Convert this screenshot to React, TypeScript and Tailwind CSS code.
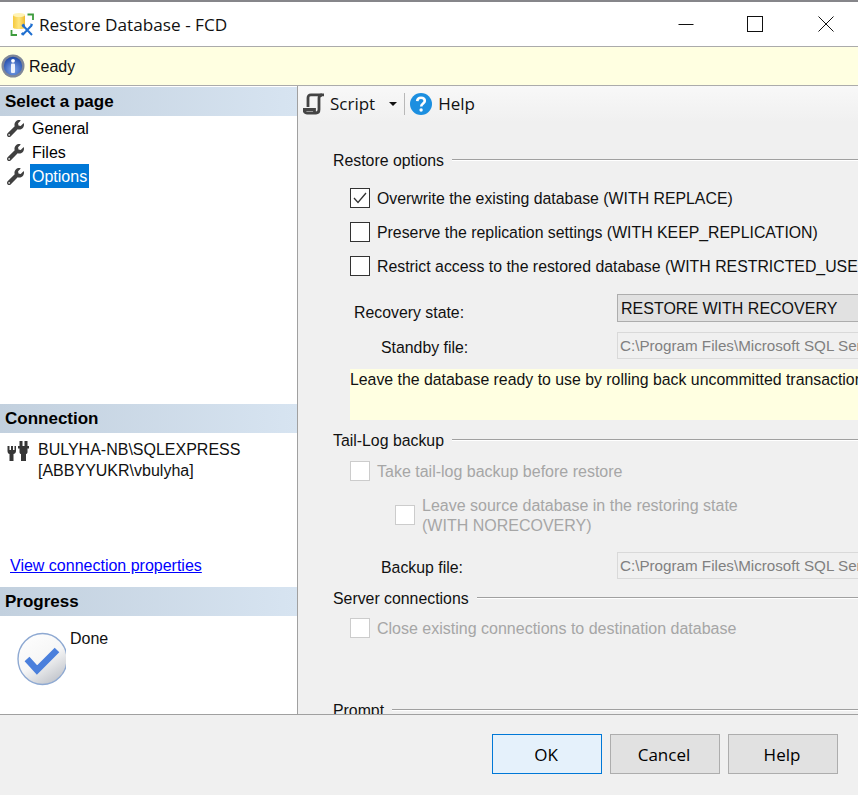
import React from "react";
import { FaWrench } from "react-icons/fa";

function TitleIcon() {
  return (
    <svg width="24" height="24" viewBox="0 0 24 24" className="shrink-0">
      <defs>
        <linearGradient id="db" x1="0" x2="1" y1="0" y2="0">
          <stop offset="0" stopColor="#f5c93d" />
          <stop offset="0.5" stopColor="#ffe680" />
          <stop offset="1" stopColor="#eebb2e" />
        </linearGradient>
      </defs>
      <path d="M3 3.5C3 1.5 15 1.5 15 3.5V15.5C15 17.5 3 17.5 3 15.5Z" fill="url(#db)" />
      <ellipse cx="9" cy="3" rx="6" ry="2" fill="#fff3b5" />
      <path d="M17.5 2.5H23V8M1.5 18V23H7" fill="none" stroke="#3e9c3e" strokeWidth="1.8" />
      <path d="M12.5 13L22 23M22 13L12.5 23" stroke="#1f6fd0" strokeWidth="2" />
      <path d="M11.5 13l2.5-1.5 1 2.5-2 1.5zM20 11.5l3 .5-1.5 3zM11 21.5l2-1.5 1 2-2 1.5z" fill="#1f6fd0" />
    </svg>
  );
}

function InfoIcon() {
  return (
    <svg width="24" height="24" viewBox="0 0 24 24" className="shrink-0">
      <defs>
        <radialGradient id="inf" cx="0.5" cy="0.7" r="0.7">
          <stop offset="0" stopColor="#7fa6ec" />
          <stop offset="1" stopColor="#1e49a8" />
        </radialGradient>
      </defs>
      <circle cx="12" cy="12" r="11.5" fill="#7f8798" />
      <circle cx="12" cy="12" r="9.2" fill="url(#inf)" />
      <circle cx="12" cy="6.8" r="1.9" fill="#fff" />
      <rect x="10" y="9.6" width="4" height="9.4" rx="1" fill="#eef2fb" />
    </svg>
  );
}

function PlugIcon() {
  return (
    <svg width="22" height="22" viewBox="0 0 22 22" className="shrink-0" fill="#363636">
      <path d="M0.5 6H2.5V10H4V6H4.5H6V10H7.5V6H9V11C9 13 7.5 14 6.5 14V21H2.5V14C1.5 14 0.5 13 0.5 11Z" />
      <path d="M12.5 1H15.5V6H17.5V1H20.5V6H22V8.5H20.5V12C20.5 13.5 19.5 14 19 14V21H14V14C13.5 14 12.5 13.5 12.5 12V8.5H11V6H12.5Z" />
    </svg>
  );
}

function DoneIcon() {
  return (
    <svg width="49" height="54" viewBox="0 0 49 54" className="shrink-0 mt-[3px]">
      <defs>
        <linearGradient id="done" x1="0" x2="0.6" y1="0" y2="1">
          <stop offset="0" stopColor="#ffffff" />
          <stop offset="0.6" stopColor="#f6f6f6" />
          <stop offset="1" stopColor="#c6c9cf" />
        </linearGradient>
      </defs>
      <ellipse cx="25.5" cy="27" rx="24.5" ry="25.5" fill="url(#done)" stroke="#8ea9d2" strokeWidth="1.4" />
      <path d="M10 27L20 38L40 18" fill="none" stroke="#4a7fdc" strokeWidth="6.5" strokeLinejoin="miter" />
    </svg>
  );
}

function ScriptIcon() {
  return (
    <svg width="22" height="22" viewBox="0 0 22 22" className="shrink-0" fill="none" stroke="#444" strokeWidth="2.8">
      <path d="M5 14V5C5 3 6 1.8 8 1.8H21" />
      <path d="M19 2C17 2 16 3.2 16 5V16.5C16 19 15 20 13 20H4C2 20 1 18.8 1 16.5H11.5V19" />
    </svg>
  );
}

function HelpIcon() {
  return (
    <svg width="22" height="22" viewBox="0 0 22 22" className="shrink-0">
      <circle cx="11" cy="11" r="11" fill="#1c8fe0" />
      <path d="M7.2 8.2C7.4 5.8 9 4.8 11 4.8C13.2 4.8 14.8 6 14.8 8C14.8 10.4 11.2 10.6 11.2 13.4" fill="none" stroke="#fff" strokeWidth="2.6" />
      <circle cx="11.1" cy="17" r="1.7" fill="#fff" />
    </svg>
  );
}

function PaneHeader({ children }: { children: React.ReactNode }) {
  return (
    <div className="h-[29px] pl-[5px] flex items-center bg-gradient-to-r from-[#c2d0de] to-[#d7e4f1] font-bold text-[17px] text-black">
      {children}
    </div>
  );
}

function PageItem({ label, active }: { label: string; active?: boolean }) {
  return (
    <div className="h-6 flex items-center pl-[7px]">
      <FaWrench className="text-[#404040] shrink-0" size={17} />
      <span className={active ? "ml-[6px] h-6 px-[2px] pt-[2px] flex items-center bg-[#0078d7] text-white" : "ml-[6px] px-[2px] pt-[2px] text-black"}>
        {label}
      </span>
    </div>
  );
}

function Section({ title, className }: { title: string; className?: string }) {
  return (
    <div className={"flex items-center h-6 ml-[35px] text-[15.85px] " + (className ?? "")}>
      <span className="whitespace-nowrap pt-[2px] text-[#111]">{title}</span>
      <div className="ml-2 flex-1 h-[2px] border-t border-[#a0a0a0] bg-white" />
    </div>
  );
}

function CheckBox({ checked, disabled }: { checked?: boolean; disabled?: boolean }) {
  return (
    <div className={"w-5 h-5 shrink-0 border bg-white flex items-center justify-center " + (disabled ? "border-[#cccccc]" : "border-[#333333]")}>
      {checked && (
        <svg width="16" height="16" viewBox="0 0 16 16" fill="none" stroke="#333" strokeWidth="1.3">
          <path d="M2 8L6 12.5L14 3" />
        </svg>
      )}
    </div>
  );
}

function CheckRow({ label, checked }: { label: string; checked?: boolean }) {
  return (
    <div className="h-[34px] ml-[52px] flex items-center gap-[7px] whitespace-nowrap text-[#111] text-[15.85px]">
      <CheckBox checked={checked} />
      <span className="pt-[2px]">{label}</span>
    </div>
  );
}

function DisabledRow({ label, className }: { label: string; className?: string }) {
  return (
    <div className={"h-[34px] ml-[52px] flex items-center gap-[7px] whitespace-nowrap text-[#a6a6a6] " + (className ?? "")}>
      <CheckBox disabled />
      <span className="pt-[2px]">{label}</span>
    </div>
  );
}

function PathField({ label, labelClass, className }: { label: string; labelClass: string; className?: string }) {
  return (
    <div className={"flex items-center h-[27px] text-[15.85px] " + (className ?? "")}>
      <span className={"whitespace-nowrap text-[#111] mt-[5px] " + labelClass}>{label}</span>
      <div className="ml-auto w-[400px] shrink-0 -mr-[159px] h-[27px] pl-[2px] flex items-center border border-[#d9d9d9] bg-[#f0f0f0] text-[#808080] text-[15.2px] whitespace-nowrap overflow-hidden">
        C:\Program Files\Microsoft SQL Server\MSSQL14.SQLEXPRESS\MSSQL\Backup
      </div>
    </div>
  );
}

function FooterButton({ label, primary }: { label: string; primary?: boolean }) {
  return (
    <button
      className={
        "w-[110px] h-10 border pr-[2px] pt-px font-['Open_Sans',sans-serif] text-[17px] text-black " +
        (primary ? "border-[#0078d7] bg-[#e5f1fb]" : "border-[#adadad] bg-[#e1e1e1]")
      }
    >
      {label}
    </button>
  );
}

export default function App() {
  return (
    <div className="w-[858px] h-[795px] overflow-hidden flex flex-col bg-[#f0f0f0] font-['Liberation_Sans',sans-serif] text-base leading-5">
      <div className="h-[2px] shrink-0 bg-[#86868a]" />

      {/* title bar */}
      <div className="h-[44px] shrink-0 bg-white flex items-center pl-[10px] border-b border-[#ababab] box-content">
        <TitleIcon />
        <span className="ml-[5px] pt-[2px] font-['Open_Sans',sans-serif] text-[17.2px] text-[#111]">Restore Database - FCD</span>
        <div className="ml-auto flex items-center">
          <svg width="16" height="16" viewBox="0 0 16 16" className="mr-[53px]">
            <path d="M0.5 8.5H15.5" stroke="#111" strokeWidth="1" />
          </svg>
          <svg width="16" height="16" viewBox="0 0 16 16" className="mr-[55px]">
            <rect x="0.5" y="0.5" width="15" height="15" fill="none" stroke="#111" strokeWidth="1" />
          </svg>
          <svg width="16" height="16" viewBox="0 0 16 16" className="mr-[24px]">
            <path d="M0.5 0.5L15.5 15.5M15.5 0.5L0.5 15.5" stroke="#111" strokeWidth="1" />
          </svg>
        </div>
      </div>

      {/* status */}
      <div className="h-[38px] shrink-0 bg-[#ffffe1] flex items-center pl-px border-b border-[#ababab] box-content">
        <InfoIcon />
        <span className="ml-[4px] pt-[2px] text-[#111]">Ready</span>
      </div>

      <div className="h-[628px] shrink-0 flex overflow-hidden">
        {/* left pane */}
        <div className="w-[298px] shrink-0 bg-white border-r border-[#a0a0a0] flex flex-col pt-px">
          <PaneHeader>Select a page</PaneHeader>
          <div className="h-[288px]">
            <PageItem label="General" />
            <PageItem label="Files" />
            <PageItem label="Options" active />
          </div>
          <PaneHeader>Connection</PaneHeader>
          <div className="h-[154px] flex flex-col pl-[7px]">
            <div className="flex mt-[7px]">
              <PlugIcon />
              <div className="ml-[9px] mt-[-1px] leading-[21px] text-[#111]">
                <div>BULYHA-NB\SQLEXPRESS</div>
                <div>[ABBYYUKR\vbulyha]</div>
              </div>
            </div>
            <a className="mt-auto mb-[11px] ml-[3px] underline text-[#0000ff]">View connection properties</a>
          </div>
          <PaneHeader>Progress</PaneHeader>
          <div className="flex pl-[17px] pt-[13px]">
            <DoneIcon />
            <span className="ml-[4px] text-[#111]">Done</span>
          </div>
        </div>

        {/* right pane */}
        <div className="flex-1 min-w-0 overflow-hidden">
          <div className="h-9 flex items-center pl-[5px] bg-gradient-to-b from-[#f8f8f8] to-[#f0f0f0] font-['Open_Sans',sans-serif] text-[17px] text-[#111]">
            <ScriptIcon />
            <span className="ml-[5px]">Script</span>
            <svg width="8" height="4" viewBox="0 0 8 4" className="ml-[14px]">
              <path d="M0 0H8L4 4Z" fill="#111" />
            </svg>
            <div className="ml-[7px] w-px h-[22px] bg-[#b8b8b8]" />
            <div className="ml-[5px]">
              <HelpIcon />
            </div>
            <span className="ml-[6px]">Help</span>
          </div>

          <Section title="Restore options" className="mt-[26px]" />
          <div className="mt-[9px]">
            <CheckRow label="Overwrite the existing database (WITH REPLACE)" checked />
            <CheckRow label="Preserve the replication settings (WITH KEEP_REPLICATION)" />
            <CheckRow label="Restrict access to the restored database (WITH RESTRICTED_USER)" />
          </div>

          <div className="flex items-center h-[28px] mt-[11px] text-[15.85px]">
            <span className="ml-[56px] mt-[10px] whitespace-nowrap text-[#111]">Recovery state:</span>
            <div className="ml-auto w-[400px] shrink-0 -mr-[159px] h-[28px] pl-[3px] pt-[2px] flex items-center border border-[#adadad] bg-[#e1e1e1] text-[#111] text-[16px] whitespace-nowrap">
              RESTORE WITH RECOVERY
            </div>
          </div>
          <PathField label="Standby file:" labelClass="ml-[83px]" className="mt-[10px]" />
          <div className="mt-[10px] ml-[52px] h-[51px] bg-[#ffffe1] pt-px whitespace-nowrap overflow-hidden text-[#111] text-[15.85px]">
            Leave the database ready to use by rolling back uncommitted transactions. Additional transaction logs cannot be restored.
          </div>

          <Section title="Tail-Log backup" className="mt-[8px]" />
          <DisabledRow label="Take tail-log backup before restore" className="mt-[2px]" />
          <div className="ml-[97px] mt-[7px] h-[40px] flex items-center gap-[7px] text-[#a6a6a6] whitespace-nowrap">
            <CheckBox disabled />
            <div className="leading-5 pt-[2px]">
              <div>Leave source database in the restoring state</div>
              <div>(WITH NORECOVERY)</div>
            </div>
          </div>
          <PathField label="Backup file:" labelClass="ml-[83px]" className="mt-[17px]" />

          <Section title="Server connections" className="mt-[7px]" />
          <DisabledRow label="Close existing connections to destination database" className="mt-px" />
          <Section title="Prompt" className="mt-[53px]" />
        </div>
      </div>

      {/* footer */}
      <div className="flex-1 border-t border-[#a0a0a0] flex justify-end gap-2 pt-[19px] pr-5">
        <FooterButton label="OK" primary />
        <FooterButton label="Cancel" />
        <FooterButton label="Help" />
      </div>
    </div>
  );
}
